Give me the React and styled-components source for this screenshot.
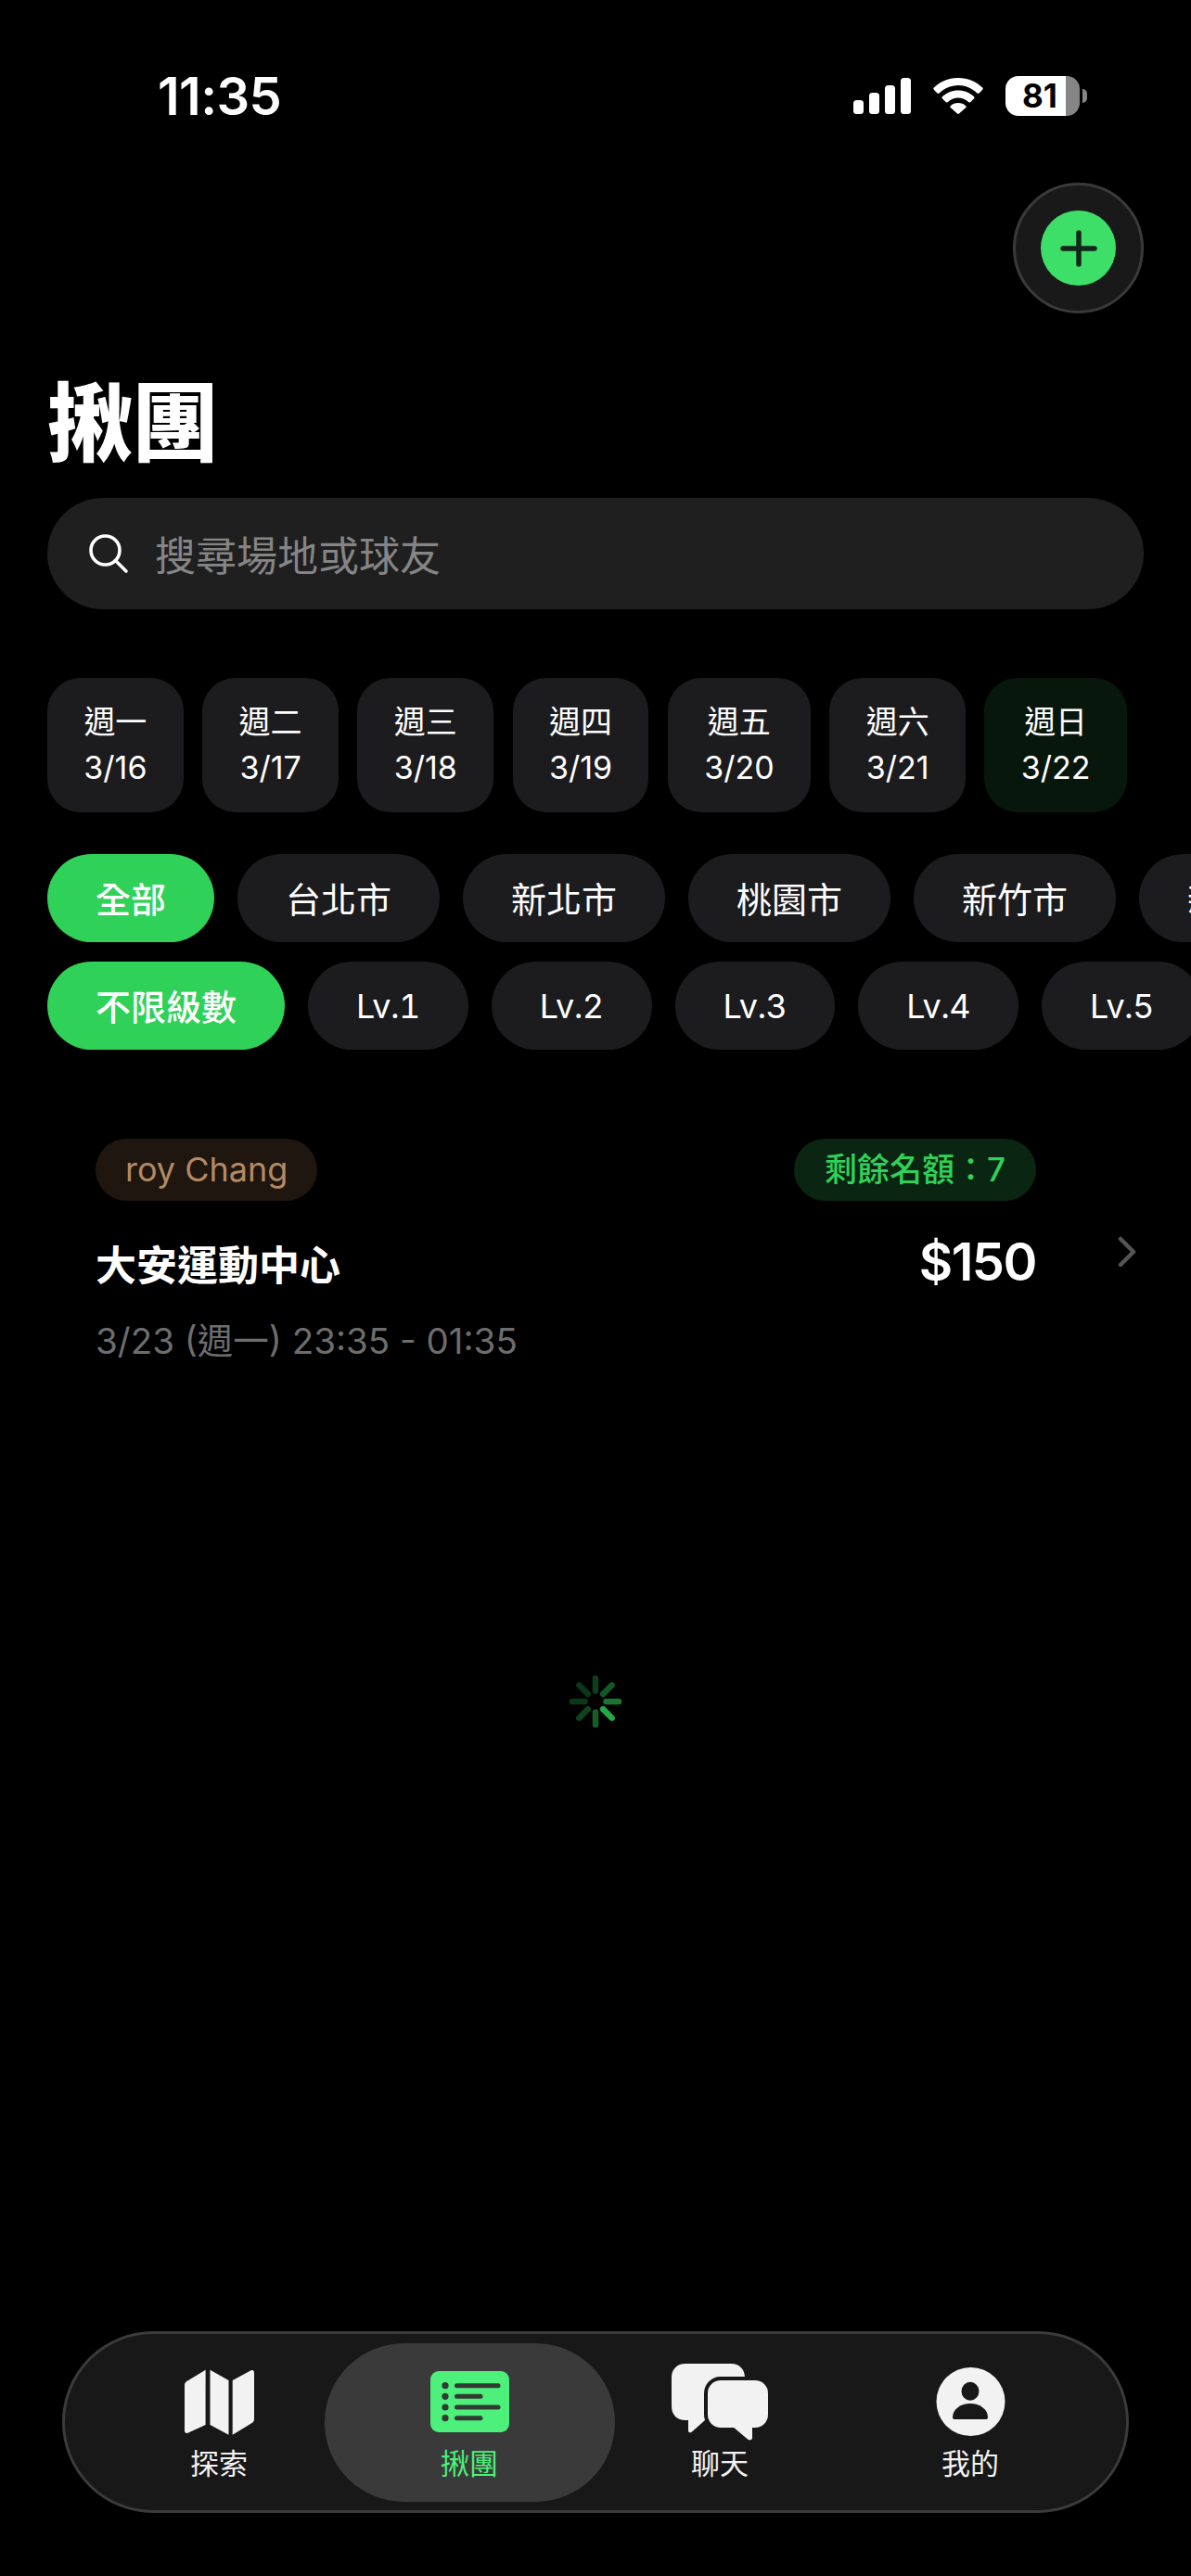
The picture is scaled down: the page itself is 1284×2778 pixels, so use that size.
import styled, { createGlobalStyle } from 'styled-components';

const GlobalStyle = createGlobalStyle`
  html, body {
    margin: 0;
    padding: 0;
    background: #000;
  }
  * {
    box-sizing: border-box;
  }
`;

const Screen = styled.div`
  width: 1284px;
  height: 2778px;
  overflow: hidden;
  display: flex;
  flex-direction: column;
  background: #000;
  color: #fff;
  font-family: Inter, "Noto Sans CJK TC", sans-serif;
`;

const StatusBar = styled.div`
  height: 197px;
  flex-shrink: 0;
  display: flex;
  justify-content: space-between;
  align-items: flex-start;
  padding: 74px 120px 0 170px;
`;

const Time = styled.div`
  font-size: 56px;
  line-height: 60px;
  font-weight: 600;
  letter-spacing: -0.6px;
`;

const StatusIcons = styled.div`
  display: flex;
  align-items: flex-start;
  padding-top: 10px;
`;

const Battery = styled.div`
  width: 80px;
  height: 43px;
  margin-left: 24px;
  margin-top: -2px;
  border-radius: 14px;
  background: linear-gradient(90deg, #fff 81%, #858585 81%);
  color: #000;
  font-size: 35px;
  font-weight: 700;
  line-height: 43px;
  padding-left: 18px;
  position: relative;
  &::after {
    content: '';
    position: absolute;
    left: 83px;
    top: 14px;
    width: 5px;
    height: 15px;
    border-radius: 0 8px 8px 0;
    background: #858585;
  }
`;

const AddRow = styled.div`
  display: flex;
  justify-content: flex-end;
  padding-right: 51px;
`;

const AddButton = styled.button`
  width: 141px;
  height: 141px;
  padding: 0;
  border-radius: 50%;
  border: 3px solid #3a3a3a;
  background: #191919;
  display: flex;
  align-items: center;
  justify-content: center;
`;

const AddInner = styled.span`
  width: 81px;
  height: 81px;
  border-radius: 50%;
  background: #3ddf68;
  display: flex;
  align-items: center;
  justify-content: center;
`;

const Title = styled.h1`
  margin: 54px 0 0 51px;
  font-size: 92px;
  line-height: 116px;
  font-weight: 900;
  font-family: "Noto Sans CJK TC", sans-serif;
`;

const Search = styled.div`
  margin: 29px 51px 0;
  height: 120px;
  border-radius: 60px;
  background: #1f1f1f;
  display: flex;
  align-items: center;
  gap: 28px;
  padding-left: 44px;
`;

const Placeholder = styled.span`
  font-size: 44px;
  color: #858585;
  font-family: "Noto Sans CJK TC", sans-serif;
`;

const Days = styled.div`
  margin-top: 74px;
  padding-left: 51px;
  display: flex;
  gap: 20.5px;
`;

const Day = styled.div`
  height: 145px;
  padding: 0 39.3px;
  border-radius: 36px;
  background: ${p => (p.$today ? '#07170c' : '#1c1c1e')};
  display: flex;
  flex-direction: column;
  align-items: center;
  justify-content: center;
  gap: 9px;
`;

const DayName = styled.span`
  font-size: 34px;
  line-height: 42px;
  margin-top: -2px;
  font-family: "Noto Sans CJK TC", sans-serif;
`;

const DayDate = styled.span`
  font-size: 34px;
  line-height: 42px;
  white-space: nowrap;
`;

const ChipRow = styled.div`
  margin-top: ${p => p.$top}px;
  padding-left: 51px;
  display: flex;
  gap: 25px;
`;

const Chip = styled.div`
  height: 95px;
  flex-shrink: 0;
  padding: 0 52px ${p => (p.$latin ? 0 : 3)}px;
  border-radius: 48px;
  display: flex;
  align-items: center;
  font-size: ${p => (p.$latin ? 36 : 38)}px;
  font-weight: ${p => (p.$active ? 500 : 400)};
  letter-spacing: ${p => (p.$latin ? '-0.6px' : '0')};
  font-variant-numeric: tabular-nums;
  white-space: nowrap;
  background: ${p => (p.$active ? '#30d158' : '#1c1c1e')};
`;

const Card = styled.div`
  margin-top: 96px;
  padding: 0 59px 0 103px;
  display: grid;
  grid-template-columns: 1fr auto 108px;
  align-items: start;
`;

const NameTag = styled.div`
  justify-self: start;
  height: 67px;
  padding: 0 32px;
  border-radius: 34px;
  background: #1f1610;
  color: #b58a62;
  font-size: 36px;
  line-height: 66px;
`;

const SpotsTag = styled.div`
  justify-self: end;
  height: 67px;
  padding: 0 33px;
  border-radius: 34px;
  background: #0a2512;
  color: #30d158;
  font-size: 35px;
  font-weight: 500;
  line-height: 66px;
  white-space: nowrap;
`;

const PlaceName = styled.div`
  margin-top: 34px;
  font-size: 44px;
  line-height: 66px;
  font-weight: 700;
  font-family: "Noto Sans CJK TC", sans-serif;
`;

const Price = styled.div`
  margin-top: 36px;
  justify-self: end;
  font-size: 56px;
  line-height: 60px;
  font-weight: 600;
  letter-spacing: -1.5px;
`;

const Arrow = styled.svg`
  margin-top: 38px;
  justify-self: end;
`;

const When = styled.div`
  grid-column: 1 / -1;
  margin-top: 26px;
  font-size: 38.5px;
  line-height: 50px;
  color: #6d6d6d;
`;

const SpinnerWrap = styled.div`
  margin-top: 334px;
  display: flex;
  justify-content: center;
`;

const TabBar = styled.nav`
  margin: auto 67px 68px;
  height: 196px;
  border-radius: 98px;
  border: 3px solid #3b3b3b;
  background: #181818;
  display: flex;
  align-items: center;
  padding: 0 31px;
`;

const Tab = styled.div`
  flex: none;
  width: ${p => (p.$active ? 313 : 270)}px;
  margin: ${p => (p.$active ? '0 -21.5px' : '0')};
  height: 171px;
  padding-top: 5px;
  border-radius: 86px;
  background: ${p => (p.$active ? '#3a3a3a' : 'transparent')};
  color: ${p => (p.$active ? '#4cf07a' : '#f2f2f2')};
  display: flex;
  flex-direction: column;
  align-items: center;
`;

const TabIcon = styled.div`
  height: 103px;
  display: flex;
  align-items: center;
  justify-content: center;
  padding-top: 14px;
`;

const TabLabel = styled.span`
  font-size: 31px;
  line-height: 40px;
  font-family: "Noto Sans CJK TC", sans-serif;
`;

const days = [
  ['週一', '3/16'], ['週二', '3/17'], ['週三', '3/18'], ['週四', '3/19'],
  ['週五', '3/20'], ['週六', '3/21'], ['週日', '3/22'],
];
const cities = ['全部', '台北市', '新北市', '桃園市', '新竹市', '新竹縣'];
const levels = ['不限級數', 'Lv.1', 'Lv.2', 'Lv.3', 'Lv.4', 'Lv.5'];

function Signal() {
  return (
    <svg width="62" height="39" viewBox="0 0 62 39" fill="#fff">
      <rect x="0" y="24" width="11" height="15" rx="3.5" />
      <rect x="17" y="16" width="11" height="23" rx="3.5" />
      <rect x="34" y="8" width="11" height="31" rx="3.5" />
      <rect x="51" y="0" width="11" height="39" rx="3.5" />
    </svg>
  );
}

function Wifi() {
  return (
    <svg width="54" height="39" viewBox="0 0 54 39" fill="#fff" style={{ marginLeft: 24 }}>
      <path d="M27 0C16.8 0 7.6 4 .8 10.5c-.7.7-.7 1.5 0 2.2l3.6 3.7c.6.6 1.5.6 2.2 0C12 11.3 19.2 8 27 8s15 3.3 20.4 8.4c.7.6 1.6.6 2.2 0l3.6-3.7c.7-.7.7-1.5 0-2.2C46.4 4 37.2 0 27 0Z" />
      <path d="M27 13.5c-6.6 0-12.7 2.6-17.1 6.8-.6.6-.6 1.4 0 2l3.7 3.8c.6.6 1.4.6 2 .1C18.8 23.2 22.7 21.5 27 21.5s8.2 1.7 11.4 4.7c.6.5 1.4.5 2-.1l3.7-3.8c.6-.6.6-1.4 0-2C39.7 16.1 33.6 13.5 27 13.5Z" />
      <path d="M27 27c-3.2 0-6.1 1.2-8.3 3.2-.6.5-.6 1.3 0 1.9l7.3 6.5c.6.5 1.4.5 2 0l7.3-6.5c.6-.6.6-1.4 0-1.9C33.1 28.2 30.2 27 27 27Z" />
    </svg>
  );
}

function SearchIcon() {
  return (
    <svg width="44" height="44" viewBox="0 0 44 44" fill="none" stroke="#fff" strokeWidth="3.6" strokeLinecap="round">
      <circle cx="18.5" cy="18.5" r="15.5" />
      <line x1="29.5" y1="29.5" x2="41" y2="41" />
    </svg>
  );
}

function Spinner() {
  const spokes = [0.56, 0.8, 0.45, 0.32, 0.26, 0.26, 0.3, 0.42];
  return (
    <svg width="60" height="60" viewBox="-30 -30 60 60" stroke="#30d158" strokeWidth="6.5" strokeLinecap="round">
      {spokes.map((o, i) => (
        <line key={i} x1="11.5" y1="0" x2="25" y2="0" opacity={o} transform={`rotate(${i * 45})`} />
      ))}
    </svg>
  );
}

function MapIcon() {
  return (
    <svg width="75" height="71" viewBox="0 0 75 71" fill="#f2f2f2">
      <path d="M22.6.7V60L3.5 68.7C1.5 69.5 0 68.5 0 66.5V17C0 15.5.7 14 2 13.2Z" />
      <path d="M27.5.7 47.5 12V70.7L27.5 60Z" />
      <path d="M51.7 12 71.5 1.3C73.5.3 75 1.5 75 3.5V54C75 55.5 74.4 56.8 73 57.7L51.7 70.7Z" />
    </svg>
  );
}

function ListIcon() {
  const rows = [[15.7, 73], [27.3, 54], [39, 73], [50.7, 54]];
  return (
    <svg width="85" height="66" viewBox="0 0 85 66">
      <rect width="85" height="66" rx="9" fill="#4cf07a" />
      {rows.map(([y, end]) => (
        <g key={y}>
          <circle cx="16" cy={y} r="3.6" fill="#333a35" />
          <line x1="28.5" y1={y} x2={end} y2={y} stroke="#333a35" strokeWidth="5" strokeLinecap="round" />
        </g>
      ))}
    </svg>
  );
}

function ChatIcon() {
  return (
    <svg width="104" height="83" viewBox="0 0 104 83" fill="#f2f2f2">
      <path d="M15 0H64C73 0 79 6 79 15V40H40V61H36L22 73.5C20 75 18 74.5 18 72V61H15C6 61 0 55 0 46V15C0 6 6 0 15 0Z" />
      <rect x="39" y="18" width="65" height="51" rx="14" stroke="#181818" strokeWidth="8" paintOrder="stroke" />
      <path d="M66 68 82 81.5C84 83 87 82.5 87 80V68Z" />
    </svg>
  );
}

function PersonIcon() {
  return (
    <svg width="75" height="74" viewBox="0 0 75 74">
      <circle cx="37.5" cy="37" r="37" fill="#f2f2f2" />
      <ellipse cx="37" cy="25.7" rx="9.5" ry="10" fill="#181818" />
      <path d="M18 54C18 45 27 39 37 39S56 45 56 54Q56 56 54 56H20Q18 56 18 54Z" fill="#181818" />
    </svg>
  );
}

export default function App() {
  return (
    <Screen>
      <GlobalStyle />
      <StatusBar>
        <Time>11:35</Time>
        <StatusIcons>
          <Signal />
          <Wifi />
          <Battery>81</Battery>
        </StatusIcons>
      </StatusBar>

      <AddRow>
        <AddButton>
          <AddInner>
            <svg width="40" height="40" viewBox="0 0 40 40" stroke="#14261a" strokeWidth="5.5" strokeLinecap="round">
              <line x1="20" y1="3" x2="20" y2="37" />
              <line x1="3" y1="20" x2="37" y2="20" />
            </svg>
          </AddInner>
        </AddButton>
      </AddRow>

      <Title>揪團</Title>

      <Search>
        <SearchIcon />
        <Placeholder>搜尋場地或球友</Placeholder>
      </Search>

      <Days>
        {days.map(([name, date]) => (
          <Day key={date} $today={date === '3/22'}>
            <DayName>{name}</DayName>
            <DayDate>{date}</DayDate>
          </Day>
        ))}
      </Days>

      <ChipRow $top={45}>
        {cities.map(c => <Chip key={c} $active={c === '全部'}>{c}</Chip>)}
      </ChipRow>
      <ChipRow $top={21}>
        {levels.map(l => <Chip key={l} $active={l === '不限級數'} $latin={l !== '不限級數'}>{l}</Chip>)}
      </ChipRow>

      <Card>
        <NameTag>roy Chang</NameTag>
        <SpotsTag>剩餘名額：7</SpotsTag>
        <span />
        <PlaceName>大安運動中心</PlaceName>
        <Price>$150</Price>
        <Arrow width="20" height="34" viewBox="0 0 20 34" fill="none" stroke="#555" strokeWidth="4.5" strokeLinecap="round" strokeLinejoin="round">
          <polyline points="3,3 17,17 3,31" />
        </Arrow>
        <When>3/23 (週一) 23:35 - 01:35</When>
      </Card>

      <SpinnerWrap>
        <Spinner />
      </SpinnerWrap>

      <TabBar>
        <Tab><TabIcon><MapIcon /></TabIcon><TabLabel>探索</TabLabel></Tab>
        <Tab $active><TabIcon><ListIcon /></TabIcon><TabLabel>揪團</TabLabel></Tab>
        <Tab><TabIcon><ChatIcon /></TabIcon><TabLabel>聊天</TabLabel></Tab>
        <Tab><TabIcon><PersonIcon /></TabIcon><TabLabel>我的</TabLabel></Tab>
      </TabBar>
    </Screen>
  );
}
